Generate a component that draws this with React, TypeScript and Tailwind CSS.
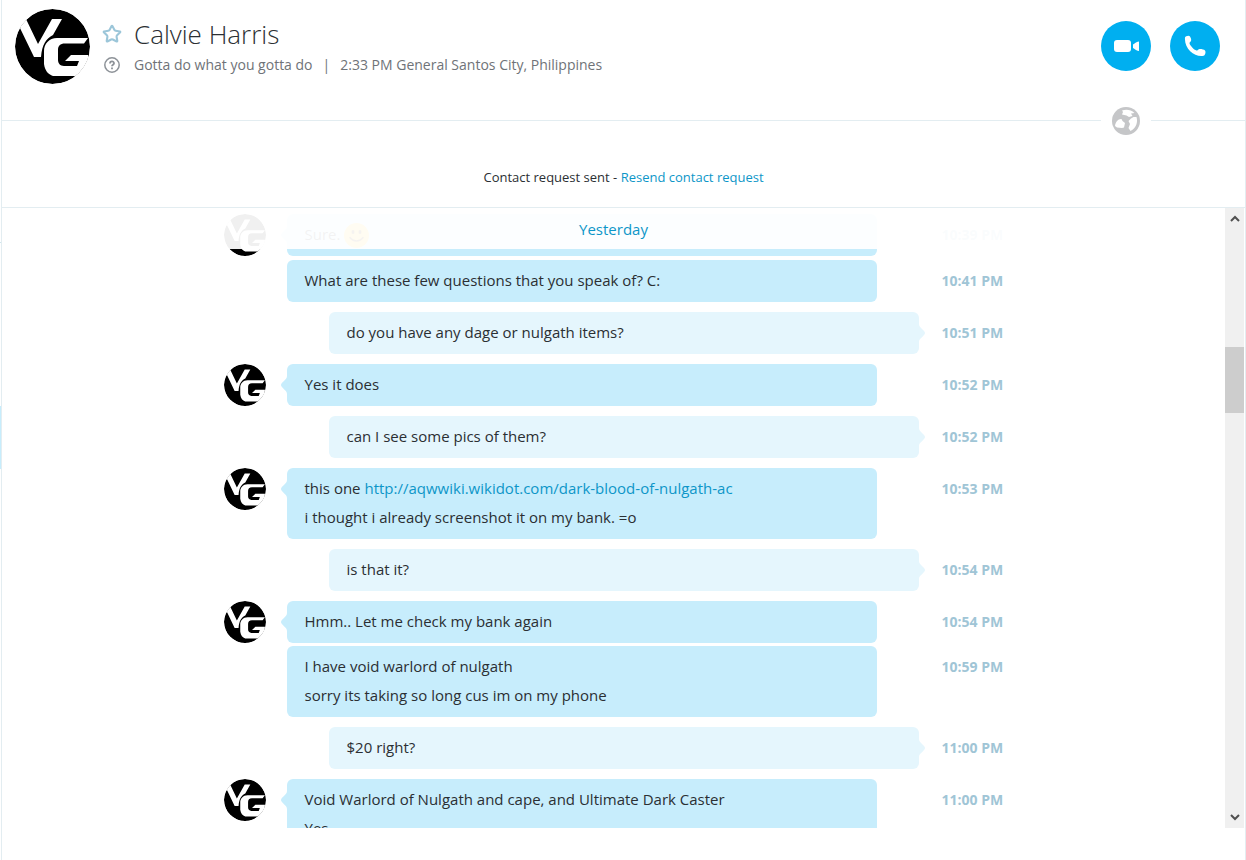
import React from 'react';
import { Star } from 'lucide-react';

interface Message {
  id: number;
  time: string;
  outgoing?: boolean;
  grouped?: boolean;
  lines: React.ReactNode[];
}

const Smile = () => (
  <svg className="inline-block size-[25px] align-middle" viewBox="0 0 25 25" role="img" aria-label="smile">
    <circle cx="12.5" cy="12.5" r="12.5" fill="#ffc820" />
    <ellipse cx="9" cy="9" rx="1.5" ry="2" fill="#5b3b10" />
    <ellipse cx="16" cy="9" rx="1.5" ry="2" fill="#5b3b10" />
    <path d="M6 14.500c3 4.500 10 4.500 13 0" fill="none" stroke="#5b3b10" strokeWidth="1.500" strokeLinecap="round" />
  </svg>
);

const messages: Message[] = [
  { id: 1, time: '10:39 PM', lines: [<>Sure. <Smile /></>] },
  { id: 2, time: '10:41 PM', grouped: true, lines: ['What are these few questions that you speak of? C:'] },
  { id: 3, time: '10:51 PM', outgoing: true, lines: ['do you have any dage or nulgath items?'] },
  { id: 4, time: '10:52 PM', lines: ['Yes it does'] },
  { id: 5, time: '10:52 PM', outgoing: true, lines: ['can I see some pics of them?'] },
  {
    id: 6,
    time: '10:53 PM',
    lines: [
      <>
        this one{' '}
        <a href="http://aqwwiki.wikidot.com/dark-blood-of-nulgath-ac" className="text-[#0d96c8]">
          http://aqwwiki.wikidot.com/dark-blood-of-nulgath-ac
        </a>
      </>,
      'i thought i already screenshot it on my bank. =o',
    ],
  },
  { id: 7, time: '10:54 PM', outgoing: true, lines: ['is that it?'] },
  { id: 8, time: '10:54 PM', lines: ['Hmm.. Let me check my bank again'] },
  {
    id: 9,
    time: '10:59 PM',
    grouped: true,
    lines: ['I have void warlord of nulgath', 'sorry its taking so long cus im on my phone'],
  },
  { id: 10, time: '11:00 PM', outgoing: true, lines: ['$20 right?'] },
  { id: 11, time: '11:00 PM', lines: ['Void Warlord of Nulgath and cape, and Ultimate Dark Caster', 'Yes'] },
];

const Avatar: React.FC<{ className: string }> = ({ className }) => (
  <svg className={`shrink-0 rounded-full ${className}`} viewBox="0 0 75 75" role="img" aria-label="Calvie Harris">
    <circle cx="37.5" cy="37.5" r="37.5" fill="#000" />
    <path d="M4 17 11 10 23 35 37 10H47L38 26C31 30 27 35 26 48H19z" fill="#fff" />
    <path
      d="M73 29H42C34 29 29 35 29 42V55C30 62 33 65 38 67H61L65 63 73 55V46H56L50 52H64L62 57H49C45 57 43 54 43 51V41C43 37 45 34.500 50 34.500H69z"
      fill="#fff"
    />
  </svg>
);

const GlobeIcon = () => (
  <svg className="size-7" viewBox="0 0 28 28" aria-hidden="true">
    <circle cx="14" cy="14" r="14" fill="#c5c6c8" />
    <path d="M10 3.500C14 2 19 2.500 22.500 6L19 6.500 20.500 9 17 10 14.500 8.500 10 7.500 11 5z" fill="#fff" />
    <path d="M19 11.500 21.500 10h3C26 15 24.500 21 18.500 24L16.500 21 18 17 16.500 14z" fill="#fff" />
    <path d="M3 19C3.500 14.500 6.500 11.500 9.500 12L10.500 14 13 16 12 20.500 10 21 5 20.500z" fill="#fff" />
  </svg>
);

const Tail: React.FC<{ outgoing?: boolean }> = ({ outgoing }) => (
  <svg
    className={
      outgoing
        ? 'absolute top-3 left-full h-[18px] w-1.5 -scale-x-100 text-[#e5f6fd]'
        : 'absolute top-3 right-full h-[18px] w-1.5 text-[#c7edfc]'
    }
    viewBox="0 0 6 18"
    fill="currentColor"
    aria-hidden="true"
  >
    <path d="M6 0c0 4-6 6-6 9s6 5 6 9z" />
  </svg>
);

const MessageRow: React.FC<{ message: Message }> = ({ message }) => {
  const { outgoing, grouped, lines, time } = message;
  return (
    <li className={`flex items-start ${grouped ? 'mt-[3px]' : 'mt-2.5 first:mt-0 first:pb-px'}`}>
      <div className={outgoing ? 'w-[105px] shrink-0' : 'w-[63px] shrink-0'}>
        {!outgoing && !grouped && <Avatar className="size-[42px]" />}
      </div>
      <div
        className={`relative w-[590px] rounded-md px-[18px] pt-1.5 pb-[7px] text-[15px] leading-[29px] text-[#2b2f33] ${
          outgoing ? 'bg-[#e5f6fd]' : 'bg-[#c7edfc]'
        }`}
      >
        {!grouped && <Tail outgoing={outgoing} />}
        {lines.map((line, i) => (
          <p key={i}>{line}</p>
        ))}
      </div>
      <time className="ml-auto w-[62px] shrink-0 text-sm leading-[42px] font-bold whitespace-nowrap text-[#a0c5d6]">
        {time}
      </time>
    </li>
  );
};

const ChatHeader = () => (
  <header className="flex h-[120px] items-start pt-[9px] pr-[25px] pl-[13px]">
    <Avatar className="size-[75px]" />
    <div className="ml-3 flex min-w-0 flex-1 flex-col">
      <div className="flex h-[46px] items-center gap-3 pt-1">
        <button type="button" aria-label="Add to favourites" className="text-[#9cc6d9]">
          <Star size={20} strokeWidth={2.5} />
        </button>
        <h1 className="text-[26px] font-light text-[#2b2f33]">Calvie Harris</h1>
      </div>
      <div className="flex items-center gap-3 text-sm text-[#6f7378]">
        <svg className="mx-0.5 size-4" viewBox="0 0 16 16" fill="none" stroke="#8d9298" aria-hidden="true">
          <circle cx="8" cy="8" r="7.2" strokeWidth="1.500" />
          <path d="M6 6.500c0-2.700 4-2.700 4-.2 0 1.500-2 1.300-2 2.900M8 10.500v1.700" strokeWidth="1.800" />
        </svg>
        <div className="flex gap-2.5">
          <span>Gotta do what you gotta do</span>
          <span>|</span>
          <span>2:33 PM General Santos City, Philippines</span>
        </div>
      </div>
    </div>
    <div className="mt-3 flex gap-[19px]">
      <button
        type="button"
        aria-label="Video call"
        className="flex size-[50px] items-center justify-center rounded-full bg-[#00aff0]"
      >
        <svg className="h-3 w-[25px]" viewBox="0 0 25 12" fill="#fff">
          <rect x="0" y="0" width="17" height="12" rx="3" />
          <path d="M19 4.500C20.500 3.500 22.500 2 24.500 1.500 25 1.500 25 2 25 2.500v7.500c0 .5 0 1-.5 1-2-.5-4-2-5.500-3z" />
        </svg>
      </button>
      <button
        type="button"
        aria-label="Call"
        className="flex size-[50px] items-center justify-center rounded-full bg-[#00aff0]"
      >
        <svg className="size-[22px]" viewBox="0 0 22 22" fill="#fff">
          <path d="M1 2.500C1.500 1 5 0 6 1.500c1 1.500 1.500 3 1 4.500-.4 1-1.500 1.200-1.500 2 0 2 4.500 7 7 7.500 1 .2 1.500-1 2.500-1.300 1.500-.4 5 .3 6 1.300 1.200 1.500 0 5-1.500 5.300C11 22.500 0 14 1 2.500z" />
        </svg>
      </button>
    </div>
  </header>
);

const ScrollBar = () => (
  <div className="mr-px flex w-[19px] shrink-0 flex-col items-center bg-[#f0f0f0] py-1.5" aria-hidden="true">
    <svg className="h-2.5 w-2.5" viewBox="0 0 10 10" fill="none" stroke="#505050" strokeWidth="2">
      <path d="M1 7l4-4 4 4" />
    </svg>
    <div className="mt-[123px] h-[66px] w-full bg-[#cdcdcd]" />
    <svg className="mt-auto h-2.5 w-2.5" viewBox="0 0 10 10" fill="none" stroke="#505050" strokeWidth="2">
      <path d="M1 3l4 4 4-4" />
    </svg>
  </div>
);

export default function App() {
  return (
    <div className="flex h-screen bg-white font-['Open_Sans','Noto_Sans',sans-serif]">
      <aside className="flex w-px shrink-0 flex-col">
        <div className="mt-[242px] h-px bg-[#cfe5ec]" />
        <div className="mt-[163px] h-[63px] bg-[#c7edfc]" />
      </aside>
      <main className="flex min-w-0 flex-1 flex-col border-x border-[#e3edf1]">
        <ChatHeader />
        <div className="flex h-px items-center">
          <div className="h-px flex-1 bg-[#e3edf1]" />
          <button type="button" aria-label="Language" className="mx-[11px]">
            <GlobeIcon />
          </button>
          <div className="h-px w-[94px] bg-[#e3edf1]" />
        </div>
        <p className="flex h-[87px] items-center justify-center border-b border-[#e3edf1] pt-7 text-[13px] text-[#2b2f33]">
          <span>
            Contact request sent -{' '}
            <a href="#resend" className="text-[#0d96c8]">
              Resend contact request
            </a>
          </span>
        </p>
        <section className="flex min-h-0 flex-1">
          <div className="relative min-w-0 flex-1 overflow-hidden">
            <h2 className="absolute inset-x-0 top-0 z-10 h-[41px] bg-white/94 text-center text-[15px] leading-[43px] text-[#0d96c8]">
              Yesterday
            </h2>
            <ul className="mx-auto w-[780px] max-w-full pt-1.5">
              {messages.map((message) => (
                <MessageRow key={message.id} message={message} />
              ))}
            </ul>
          </div>
          <ScrollBar />
        </section>
        <footer className="h-8 shrink-0" />
      </main>
    </div>
  );
}
